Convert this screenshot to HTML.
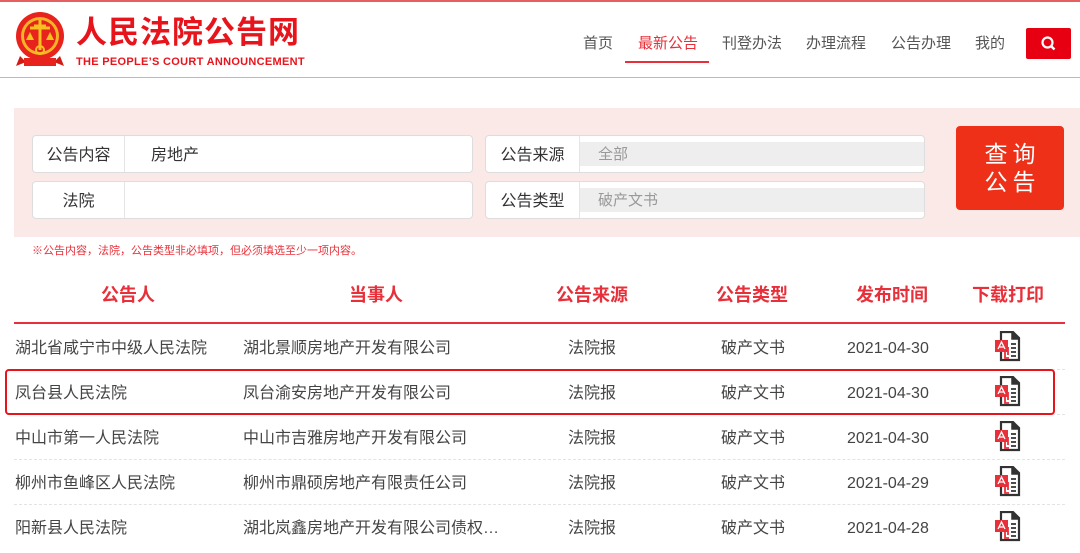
<!DOCTYPE html>
<html><head><meta charset="utf-8"><style>
*{margin:0;padding:0;box-sizing:border-box}
body{width:1080px;height:541px;overflow:hidden;background:#fff;font-family:"Liberation Sans","Noto Sans CJK SC",sans-serif;position:relative;color:#333}
.a{position:absolute}
.nav{font-size:15px;color:#555;top:34px;line-height:20px}
.box{position:absolute;background:#fff;border:1px solid #ddd;border-radius:4px;height:38px}
.lab{position:absolute;left:0;top:0;height:36px;line-height:40px;text-align:center;font-size:16px;color:#333;border-right:1px solid #e5e5e5}
.val{position:absolute;font-size:16px;line-height:40px}
.gray{position:absolute;background:#eee;top:6px;height:24px;line-height:26px;font-size:15px;color:#999;padding-left:18px}
.th{position:absolute;top:283px;font-size:18px;font-weight:bold;color:#e8303a;text-align:center;line-height:24px}
.row{position:absolute;left:14px;width:1051px;height:45px;font-size:16px;line-height:49px;color:#444}
.row span{position:absolute;white-space:nowrap}
.sep{position:absolute;left:14px;width:1051px;border-top:1px dashed #e3e3e3}
</style></head><body>
<div class="a" style="left:0;top:0;width:1080px;height:2px;background:#e56060"></div>
<svg class="a" style="left:12px;top:10px" width="56" height="60" viewBox="0 0 56 60">
<circle cx="28" cy="26" r="24" fill="#e8221c"/><circle cx="28" cy="26" r="19" fill="#f5b428"/><circle cx="28" cy="26" r="16" fill="#e8221c"/>
<path d="M8 46 L4 56 L14 52 Z M48 46 L52 56 L42 52 Z" fill="#d41a14"/>
<rect x="12" y="48" width="32" height="8" fill="#e8221c"/>
<path d="M28 10 V40 M18 18 H38 M22 16 H34" stroke="#f5c020" stroke-width="3" fill="none"/>
<path d="M14 30 l4 -8 4 8z M34 30 l4 -8 4 8z" fill="#f5c020"/>
<circle cx="28" cy="40" r="4" fill="none" stroke="#f5c020" stroke-width="2"/>
</svg>
<div class="a" style="left:76px;top:15px;font-size:31px;font-weight:bold;color:#e8141c;letter-spacing:1px;line-height:36px">人民法院公告网</div>
<div class="a" style="left:76px;top:55px;font-size:11px;font-weight:bold;color:#e8141c;line-height:14px;letter-spacing:0.3px">THE PEOPLE’S COURT ANNOUNCEMENT</div>
<div class="a nav" style="left:583px">首页</div>
<div class="a nav" style="left:638px;color:#e8303a">最新公告</div>
<div class="a" style="left:625px;top:61px;width:84px;height:2px;background:#e8303a"></div>
<div class="a nav" style="left:722px">刊登办法</div>
<div class="a nav" style="left:806px">办理流程</div>
<div class="a nav" style="left:891px">公告办理</div>
<div class="a nav" style="left:975px">我的</div>
<div class="a" style="left:1026px;top:28px;width:45px;height:31px;background:#e60012;border-radius:2px">
<svg width="45" height="31"><circle cx="21.5" cy="14.5" r="5" stroke="#fff" stroke-width="2.2" fill="none"/><path d="M25 18 L28.5 21.5" stroke="#fff" stroke-width="2.4"/></svg></div>
<div class="a" style="left:0;top:77px;width:1080px;height:1px;background:#bbb"></div>

<div class="a" style="left:14px;top:108px;width:1066px;height:129px;background:#fbe9e7"></div>
<div class="box" style="left:32px;top:135px;width:441px"><div class="lab" style="width:92px">公告内容</div><div class="val" style="left:118px">房地产</div></div>
<div class="box" style="left:32px;top:181px;width:441px"><div class="lab" style="width:92px">法院</div></div>
<div class="box" style="left:485px;top:135px;width:440px"><div class="lab" style="width:94px">公告来源</div><div class="gray" style="left:94px;width:344px">全部</div></div>
<div class="box" style="left:485px;top:181px;width:440px"><div class="lab" style="width:94px">公告类型</div><div class="gray" style="left:94px;width:344px">破产文书</div></div>
<div class="a" style="left:956px;top:126px;width:108px;height:84px;background:#ee3018;border-radius:4px;color:#fff;font-size:23px;line-height:28px;text-align:center;padding-top:14px;letter-spacing:5px;padding-left:5px">查询<br>公告</div>
<div class="a" style="left:32px;top:244px;font-size:11px;color:#e8303a;line-height:14px">※公告内容，法院，公告类型非必填项，但必须填选至少一项内容。</div>

<div class="th" style="left:78px;width:100px">公告人</div>
<div class="th" style="left:326px;width:100px">当事人</div>
<div class="th" style="left:542px;width:100px">公告来源</div>
<div class="th" style="left:702px;width:100px">公告类型</div>
<div class="th" style="left:842px;width:100px">发布时间</div>
<div class="th" style="left:958px;width:100px">下载打印</div>
<div class="a" style="left:14px;top:322px;width:1051px;height:2px;background:#e8303a"></div>

<div class="sep" style="top:369px"></div><div class="sep" style="top:414px"></div><div class="sep" style="top:459px"></div><div class="sep" style="top:504px"></div>
<div class="a" style="left:5px;top:369px;width:1050px;height:46px;border:2px solid #e8141c;border-radius:4px"></div>

<div class="row" style="top:324px"><span style="left:1px">湖北省咸宁市中级人民法院</span><span style="left:229px">湖北景顺房地产开发有限公司</span><span style="left:554px">法院报</span><span style="left:707px">破产文书</span><span style="left:833px">2021-04-30</span></div>
<div class="row" style="top:369px"><span style="left:1px">凤台县人民法院</span><span style="left:229px">凤台渝安房地产开发有限公司</span><span style="left:554px">法院报</span><span style="left:707px">破产文书</span><span style="left:833px">2021-04-30</span></div>
<div class="row" style="top:414px"><span style="left:1px">中山市第一人民法院</span><span style="left:229px">中山市吉雅房地产开发有限公司</span><span style="left:554px">法院报</span><span style="left:707px">破产文书</span><span style="left:833px">2021-04-30</span></div>
<div class="row" style="top:459px"><span style="left:1px">柳州市鱼峰区人民法院</span><span style="left:229px">柳州市鼎硕房地产有限责任公司</span><span style="left:554px">法院报</span><span style="left:707px">破产文书</span><span style="left:833px">2021-04-29</span></div>
<div class="row" style="top:504px"><span style="left:1px">阳新县人民法院</span><span style="left:229px">湖北岚鑫房地产开发有限公司债权…</span><span style="left:554px">法院报</span><span style="left:707px">破产文书</span><span style="left:833px">2021-04-28</span></div>

<svg width="0" height="0" style="position:absolute"><defs><g id="pdf">
<path d="M8 1 H20 L26 7 V29 H8 Z" fill="#fff" stroke="#333" stroke-width="2.2"/>
<path d="M19 1 V8 H26" fill="#333" stroke="#333" stroke-width="1.5"/>
<path d="M18 13 h5 M18 17 h5 M18 21 h5 M18 25 h5" stroke="#333" stroke-width="1.8"/>
<path d="M12 18 V27 H16 M15 16 V24" stroke="#e8303a" stroke-width="1.8" fill="none"/>
<rect x="2" y="9" width="13" height="12" fill="#e8303a"/>
<path d="M5 18 L8.5 11 L12 18 M6 16 h5" stroke="#fff" stroke-width="1.3" fill="none"/>
</g></defs></svg>
<svg class="a" style="left:993px;top:331px" width="28" height="31"><use href="#pdf"/></svg>
<svg class="a" style="left:993px;top:376px" width="28" height="31"><use href="#pdf"/></svg>
<svg class="a" style="left:993px;top:421px" width="28" height="31"><use href="#pdf"/></svg>
<svg class="a" style="left:993px;top:466px" width="28" height="31"><use href="#pdf"/></svg>
<svg class="a" style="left:993px;top:511px" width="28" height="31"><use href="#pdf"/></svg>
</body></html>
